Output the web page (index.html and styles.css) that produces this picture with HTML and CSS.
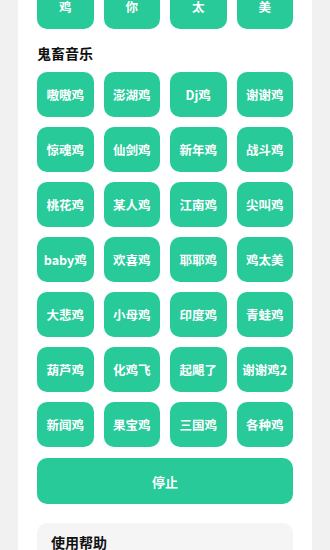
FILE: index.html
```html
<!DOCTYPE html>
<html lang="zh-CN">
<head>
    <meta charset="UTF-8">
    <meta name="viewport" content="width=device-width, initial-scale=1.0">
    <title>鸡你太美音效板</title>
    <link rel="stylesheet" href="styles.css">
</head>
<body>

<div class="panel">
    <div class="grid top-row">
        <button class="sound">鸡</button>
        <button class="sound">你</button>
        <button class="sound">太</button>
        <button class="sound">美</button>
    </div>

    <h3 class="section-title">鬼畜音乐</h3>
    <div class="grid">
        <button class="sound">嗷嗷鸡</button>
        <button class="sound">澎湖鸡</button>
        <button class="sound">Dj鸡</button>
        <button class="sound">谢谢鸡</button>
        <button class="sound">惊魂鸡</button>
        <button class="sound">仙剑鸡</button>
        <button class="sound">新年鸡</button>
        <button class="sound">战斗鸡</button>
        <button class="sound">桃花鸡</button>
        <button class="sound">某人鸡</button>
        <button class="sound">江南鸡</button>
        <button class="sound">尖叫鸡</button>
        <button class="sound">baby鸡</button>
        <button class="sound">欢喜鸡</button>
        <button class="sound">耶耶鸡</button>
        <button class="sound">鸡太美</button>
        <button class="sound">大悲鸡</button>
        <button class="sound">小母鸡</button>
        <button class="sound">印度鸡</button>
        <button class="sound">青蛙鸡</button>
        <button class="sound">葫芦鸡</button>
        <button class="sound">化鸡飞</button>
        <button class="sound">起飓了</button>
        <button class="sound">谢谢鸡2</button>
        <button class="sound">新闻鸡</button>
        <button class="sound">果宝鸡</button>
        <button class="sound">三国鸡</button>
        <button class="sound">各种鸡</button>
    </div>

    <button class="stop-button">停止</button>

    <div class="help">
        <h3 class="help-title">使用帮助</h3>
    </div>
</div>

</body>
</html>
```

FILE: styles.css
```css
body {
    font-family: "Noto Sans CJK SC", "Noto Sans", sans-serif;
    background-color: #f1f1f1;
    margin: 0;
    padding: 0 18px;
    overflow: hidden;
}
.panel {
    background: #ffffff;
    padding: 0 19px 20px;
    margin-top: -16px;
    min-height: 600px;
}
.grid {
    display: grid;
    grid-template-columns: repeat(4, 1fr);
    column-gap: 10px;
    row-gap: 10px;
}
.sound {
    height: 45px;
    border: none;
    border-radius: 10px;
    background-color: #27ca98;
    color: #ffffff;
    font-family: inherit;
    font-size: 12.5px;
    font-weight: bold;
    padding: 0;
    cursor: pointer;
}
.sound:hover {
    background-color: #1fb585;
}
.section-title {
    margin: 0;
    padding: 14px 0 9px 0;
    font-size: 14px;
    font-weight: bold;
    line-height: 20px;
    color: #111;
}
.stop-button {
    display: block;
    width: 100%;
    height: 46px;
    margin-top: 11px;
    border: none;
    border-radius: 10px;
    background-color: #27ca98;
    color: #ffffff;
    font-family: inherit;
    font-size: 13px;
    font-weight: bold;
    cursor: pointer;
}
.help {
    margin-top: 19px;
    background: #f5f5f5;
    border-radius: 10px;
    padding: 9px 14px;
    height: 80px;
}
.help-title {
    margin: 0;
    font-size: 14px;
    font-weight: bold;
    line-height: 20px;
    color: #111;
}
```
